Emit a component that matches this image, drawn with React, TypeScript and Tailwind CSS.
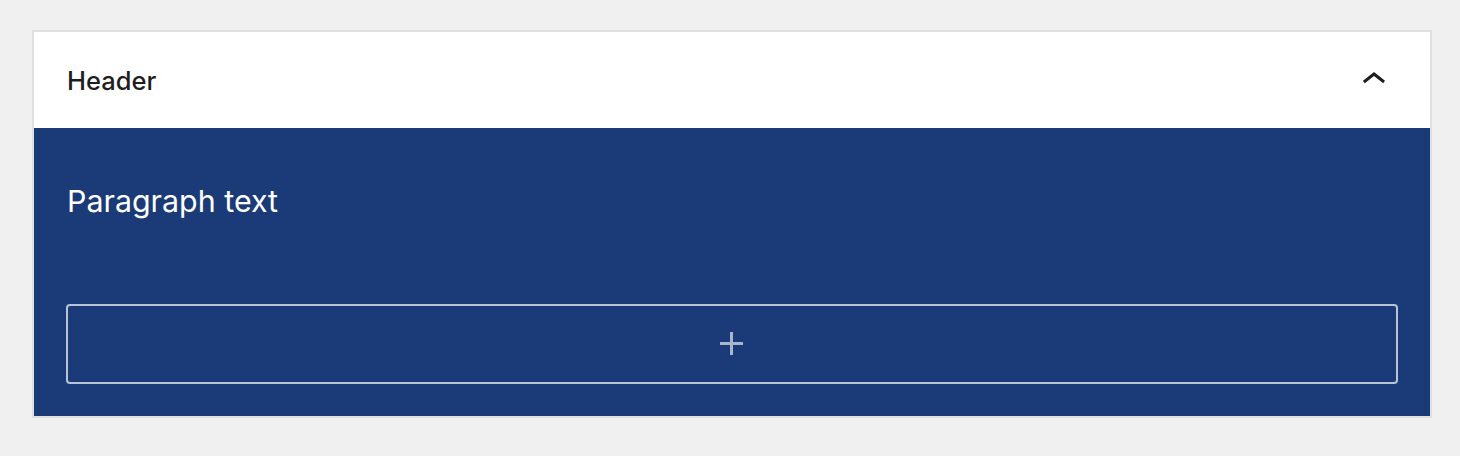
const ChevronUp = () => (
  <svg viewBox="0 0 24 24" className="w-12 h-12" fill="#1e1e1e">
    <path d="M6.5 12.4L12 8l5.5 4.4-.9 1.2L12 10l-4.6 3.6-1-1.2z" />
  </svg>
);

const Plus = () => (
  <svg viewBox="0 0 24 24" className="w-12 h-12" fill="currentColor">
    <path d="M11 12.5V17.5H12.5V12.5H17.5V11H12.5V6H11V11H6V12.5H11Z" />
  </svg>
);

export default function App() {
  return (
    <div className="min-h-screen w-full bg-[#f0f0f0] pt-[30px] pl-[32px] font-['Inter',sans-serif]">
      <div className="w-[1400px] border-2 border-[#e0e0e0] bg-white">
        {/* Header */}
        <div className="h-[96px] flex items-center justify-between pl-[33px] pr-[32px]">
          <h2 className="pt-[2px] text-[25.5px] font-medium text-[#1e1e1e] leading-[32px]">Header</h2>
          <button className="flex items-center justify-center">
            <ChevronUp />
          </button>
        </div>

        {/* Body */}
        <div className="bg-[#1a3a78] px-[32px] pt-[49px] pb-[32px]">
          <p className="pl-px text-[30.4px] leading-[48px] text-white">Paragraph text</p>
          <button className="mt-[79px] w-full h-[80px] rounded-[4px] border-2 border-[#bac4d7] flex items-center justify-center text-[#a9b5cc]">
            <Plus />
          </button>
        </div>
      </div>
    </div>
  );
}
